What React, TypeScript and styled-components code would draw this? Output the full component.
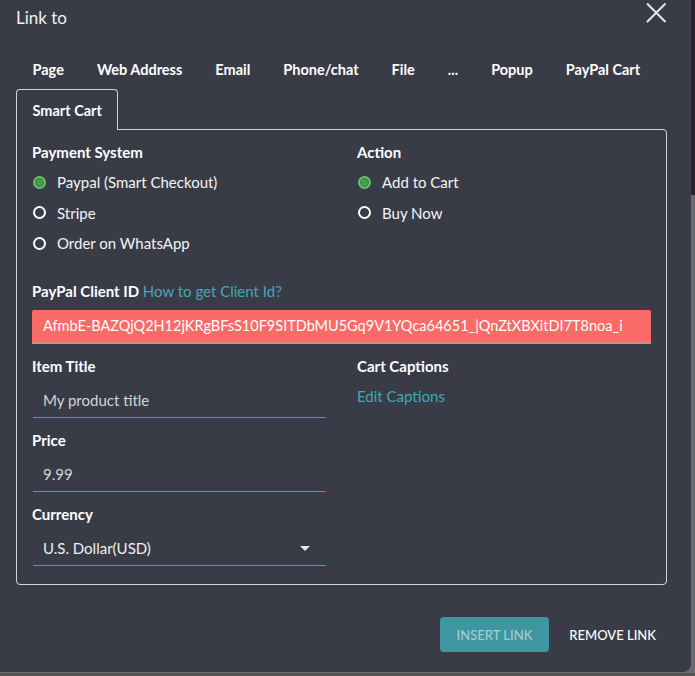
import React from 'react';
import styled, { createGlobalStyle } from 'styled-components';

const GlobalStyle = createGlobalStyle`
    html, body {
        margin: 0;
        padding: 0;
    }
    body {
        width: 695px;
        height: 676px;
        overflow: hidden;
        background: linear-gradient(to bottom, #2a2522 0, #2a2522 195px, #6b6b6d 195px, #6b6b6d 100%);
        font-family: Lato, "Noto Sans", sans-serif;
    }
`;

const Backdrop = styled.div`
    width: 695px;
    height: 676px;
    background: linear-gradient(to bottom, transparent 0, transparent 673px, #535355 673px);
`;

const Dialog = styled.div`
    width: 691px;
    box-sizing: border-box;
    background: #393c47;
    color: #ffffff;
    border-bottom-right-radius: 8px;
    padding-bottom: 20px;
    display: flex;
    flex-direction: column;
`;

const Header = styled.div`
    height: 48px;
    display: flex;
    align-items: flex-start;
    justify-content: space-between;
    padding: 0 24px 0 16px;
`;

const Title = styled.h2`
    margin: 8px 0 0;
    font-size: 17px;
    font-weight: 400;
    line-height: 20px;
    color: #f2f2f2;
`;

const CloseButton = styled.button`
    background: none;
    border: none;
    padding: 0;
    margin-top: 2px;
    width: 22px;
    height: 22px;
    cursor: pointer;
    display: flex;
`;

const TabBar = styled.div`
    display: flex;
    flex-wrap: wrap;
    margin: 0 24px 0 16px;
`;

const TabBreak = styled.div`
    flex-basis: 100%;
    height: 0;
`;

const Tab = styled.div<{ $active?: boolean }>`
    height: 41px;
    box-sizing: border-box;
    padding: 0 15.5px;
    display: flex;
    align-items: center;
    white-space: nowrap;
    font-size: 14.5px;
    font-weight: 700;
    color: #ffffff;
    border: 1px solid ${({ $active }) => ($active ? '#d4d4d4' : 'transparent')};
    border-bottom: none;
    border-radius: 4px 4px 0 0;
    background: #393c47;
    margin-bottom: ${({ $active }) => ($active ? '-1px' : '0')};
    position: relative;
    z-index: 1;
    cursor: pointer;
`;

const Panel = styled.div`
    margin: 0 24px 0 16px;
    height: 456px;
    box-sizing: border-box;
    border: 1px solid #d4d4d4;
    border-radius: 0 4px 4px 4px;
    padding: 12px 15px 0 15px;
`;

const TwoCol = styled.div`
    display: grid;
    grid-template-columns: 325px 1fr;
`;

const Column = styled.div`
    display: flex;
    flex-direction: column;
`;

const Label = styled.div<{ $gap?: number }>`
    font-size: 15px;
    font-weight: 700;
    line-height: 20px;
    margin-top: ${({ $gap }) => $gap ?? 0}px;
    white-space: nowrap;
`;

const LinkText = styled.a`
    font-weight: 400;
    color: #3fa9b5;
    text-decoration: none;
    cursor: pointer;
`;

const CaptionLink = styled(LinkText)`
    font-size: 15px;
    line-height: 20px;
    margin-top: 10px;
`;

const RadioList = styled.div`
    margin-top: 5px;
    display: flex;
    flex-direction: column;
`;

const RadioRow = styled.label`
    height: 30.5px;
    display: flex;
    align-items: center;
    gap: 11px;
    font-size: 15px;
    color: #f4f4f4;
    cursor: pointer;
`;

const RadioDot = styled.span<{ $checked?: boolean }>`
    width: 13px;
    height: 13px;
    box-sizing: border-box;
    border-radius: 50%;
    margin-left: 1px;
    border: 2px solid ${({ $checked }) => ($checked ? '#6cc070' : '#ffffff')};
    background: ${({ $checked }) => ($checked ? '#45a049' : 'transparent')};
    box-shadow: ${({ $checked }) => ($checked ? 'inset 0 0 0 1px #2f7d33' : 'none')};
`;

const ClientIdInput = styled.div`
    margin-top: 9px;
    height: 34px;
    box-sizing: border-box;
    background: #fa6a66;
    border-radius: 2px 2px 0 0;
    border-bottom: 2px solid #c98f8f;
    padding: 0 11px;
    display: flex;
    align-items: center;
    font-size: 14.5px;
    color: #ffffff;
    white-space: nowrap;
    overflow: hidden;
`;

const Field = styled.div<{ $muted?: boolean }>`
    margin-top: 8px;
    width: 293px;
    margin-left: 1px;
    height: 34px;
    box-sizing: border-box;
    border-bottom: 1px solid #43a3ad;
    padding: 0 10px;
    display: flex;
    align-items: center;
    justify-content: space-between;
    font-size: 15px;
    color: ${({ $muted }) => ($muted ? '#d2d4d8' : '#f0f0f0')};
    margin-bottom: 12px;
`;

const Caret = styled.span`
    width: 0;
    height: 0;
    border-left: 5px solid transparent;
    border-right: 5px solid transparent;
    border-top: 5px solid #e8e8e8;
    margin-right: 6px;
`;

const Footer = styled.div`
    margin-top: 32px;
    padding-right: 24px;
    display: flex;
    justify-content: flex-end;
    gap: 9px;
`;

const Button = styled.button<{ $primary?: boolean }>`
    height: 35px;
    box-sizing: border-box;
    padding: 0 ${({ $primary }) => ($primary ? 17 : 11)}px;
    border: none;
    border-radius: 4px;
    font-family: inherit;
    font-size: 13px;
    font-weight: 500;
    text-transform: uppercase;
    background: ${({ $primary }) => ($primary ? '#3e96a0' : 'transparent')};
    color: ${({ $primary }) => ($primary ? '#a5cdd2' : '#ffffff')};
    cursor: pointer;
`;

const tabs = ['Page', 'Web Address', 'Email', 'Phone/chat', 'File', '...', 'Popup', 'PayPal Cart'];

const Radio = ({ label, checked }: { label: string; checked?: boolean }) => (
    <RadioRow>
        <RadioDot $checked={checked} />
        {label}
    </RadioRow>
);

export default function App() {
    return (
        <>
            <GlobalStyle />
            <Backdrop>
                <Dialog>
                    <Header>
                        <Title>Link to</Title>
                        <CloseButton aria-label="close">
                            <svg width="22" height="22" viewBox="0 0 22 22">
                                <path d="M2 1.5 L20.5 20 M20.5 1.5 L2 20" stroke="#e6e6e6" strokeWidth="2" fill="none" />
                            </svg>
                        </CloseButton>
                    </Header>

                    <TabBar>
                        {tabs.map((t) => (
                            <Tab key={t}>{t}</Tab>
                        ))}
                        <TabBreak />
                        <Tab $active>Smart Cart</Tab>
                    </TabBar>

                    <Panel>
                        <TwoCol>
                            <Column>
                                <Label>Payment System</Label>
                                <RadioList>
                                    <Radio label="Paypal (Smart Checkout)" checked />
                                    <Radio label="Stripe" />
                                    <Radio label="Order on WhatsApp" />
                                </RadioList>
                            </Column>
                            <Column>
                                <Label>Action</Label>
                                <RadioList>
                                    <Radio label="Add to Cart" checked />
                                    <Radio label="Buy Now" />
                                </RadioList>
                            </Column>
                        </TwoCol>

                        <Label $gap={22}>
                            PayPal Client ID <LinkText>How to get Client Id?</LinkText>
                        </Label>
                        <ClientIdInput>AfmbE-BAZQjQ2H12jKRgBFsS10F9SITDbMU5Gq9V1YQca64651_|QnZtXBXitDI7T8noa_i</ClientIdInput>

                        <TwoCol>
                            <Column>
                                <Label $gap={12}>Item Title</Label>
                                <Field $muted>My product title</Field>
                                <Label>Price</Label>
                                <Field $muted>9.99</Field>
                                <Label>Currency</Label>
                                <Field>
                                    U.S. Dollar(USD)
                                    <Caret />
                                </Field>
                            </Column>
                            <Column>
                                <Label $gap={12}>Cart Captions</Label>
                                <CaptionLink>Edit Captions</CaptionLink>
                            </Column>
                        </TwoCol>
                    </Panel>

                    <Footer>
                        <Button $primary>Insert Link</Button>
                        <Button>Remove Link</Button>
                    </Footer>
                </Dialog>
            </Backdrop>
        </>
    );
}
